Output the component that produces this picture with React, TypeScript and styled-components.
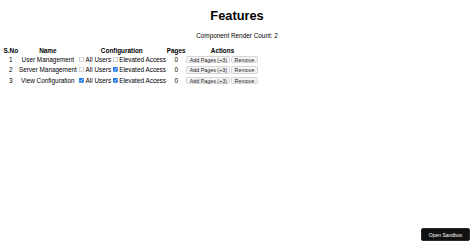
import styled, { createGlobalStyle } from 'styled-components'
import { useState } from 'react'

const GlobalStyle = createGlobalStyle`
  html, body {
    margin: 0;
    padding: 0;
    background: #fff;
  }
`

type Feature = {
  id: number
  name: string
  allUsers: boolean
  elevated: boolean
  pages: number
}

const initialFeatures: Feature[] = [
  { id: 1, name: 'User Management', allUsers: false, elevated: false, pages: 0 },
  { id: 2, name: 'Server Management', allUsers: false, elevated: true, pages: 0 },
  { id: 3, name: 'View Configuration', allUsers: true, elevated: true, pages: 0 }
]

const App = () => {
  const [features, setFeatures] = useState(initialFeatures)

  const toggle = (id: number, key: 'allUsers' | 'elevated') => {
    setFeatures((list) => list.map((f) => (f.id === id ? { ...f, [key]: !f[key] } : f)))
  }

  const addPages = (id: number) => {
    setFeatures((list) => list.map((f) => (f.id === id ? { ...f, pages: f.pages + 3 } : f)))
  }

  const remove = (id: number) => {
    setFeatures((list) => list.filter((f) => f.id !== id))
  }

  return (
    <>
      <GlobalStyle />
      <Page>
        <Title>Features</Title>
        <RenderCount>Component Render Count: 2</RenderCount>
        <Table>
          <thead>
            <tr>
              <Th>S.No</Th>
              <Th>Name</Th>
              <Th>Configuration</Th>
              <Th>Pages</Th>
              <Th>Actions</Th>
            </tr>
          </thead>
          <tbody>
            {features.map((f) => (
              <tr key={f.id}>
                <Td>{f.id}</Td>
                <Td>{f.name}</Td>
                <Td>
                  <Option>
                    <Check type="checkbox" checked={f.allUsers} onChange={() => toggle(f.id, 'allUsers')} />
                    All Users
                  </Option>
                  <Option>
                    <Check type="checkbox" checked={f.elevated} onChange={() => toggle(f.id, 'elevated')} />
                    Elevated Access
                  </Option>
                </Td>
                <Td>{f.pages}</Td>
                <Td>
                  <ActionButton onClick={() => addPages(f.id)}>Add Pages (+3)</ActionButton>
                  <ActionButton onClick={() => remove(f.id)}>Remove</ActionButton>
                </Td>
              </tr>
            ))}
          </tbody>
        </Table>
      </Page>
      <SandboxButton>Open Sandbox</SandboxButton>
    </>
  )
}

export default App

const Page = styled.div`
  zoom: 0.4;
  width: 1185px;
  padding: 8px;
  box-sizing: border-box;
  font-family: 'Liberation Sans', Arial, sans-serif;
  color: #000;
`

const Title = styled.h1`
  margin: 12.5px 0 22px;
  font-size: 32px;
  font-weight: bold;
  text-align: center;
`

const RenderCount = styled.p`
  margin: 16px 0 20px;
  font-size: 16px;
  text-align: center;
`

const Table = styled.table`
  font-size: 16px;
  border-spacing: 2px;
`

const Th = styled.th`
  padding: 1px 1px 0;
  font-weight: bold;
`

const Td = styled.td`
  padding: 1px;
  height: 24px;
  text-align: center;
  white-space: nowrap;
`

const Option = styled.label`
  display: inline-flex;
  align-items: center;
`

const Check = styled.input`
  width: 13px;
  height: 13px;
  margin: 0 3px 0 4px;
  accent-color: #1a73e8;
`

const ActionButton = styled.button`
  margin: 0 2px 0 0;
  padding: 0 6px;
  height: 19px;
  border: 2px solid #d6d6d6;
  border-radius: 3px;
  background: #f4f4f4;
  color: #222;
  font-family: 'Liberation Sans', Arial, sans-serif;
  font-size: 13.33px;
  line-height: 15px;
  cursor: pointer;
`

const SandboxButton = styled.button`
  position: fixed;
  right: 4px;
  bottom: 7px;
  width: 49px;
  height: 13px;
  padding: 0;
  border: 1px solid #2a2a2a;
  border-radius: 2px;
  background: #111;
  color: #fff;
  font-family: 'Liberation Sans', Arial, sans-serif;
  font-size: 5px;
  cursor: pointer;
`
